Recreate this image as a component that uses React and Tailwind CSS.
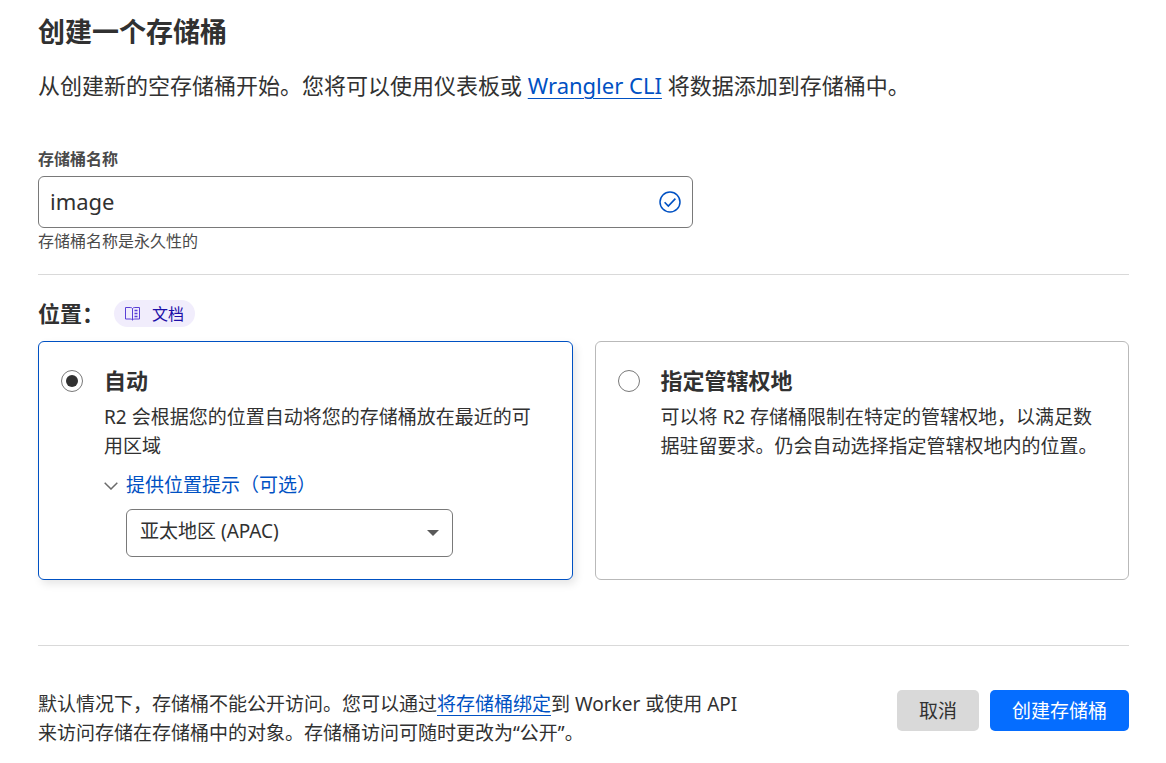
import { useState } from "react";

function CheckCircle() {
  return (
    <svg viewBox="0 0 22 22" className="h-[22px] w-[22px]" fill="none" stroke="#0051c3" aria-hidden="true">
      <circle cx="11" cy="11" r="10" strokeWidth="1.5" />
      <path d="M5.6 11.3 9.3 15 16.4 7.6" strokeWidth="1.6" />
    </svg>
  );
}

function DocsIcon() {
  return (
    <svg viewBox="0 0 15 14" className="h-[14px] w-[15px]" fill="none" stroke="#5a3fd6" strokeWidth="1" aria-hidden="true">
      <path d="M7.5 1.5C7 .8 6.200.5 5.200.5H.5v11.500h4.700c1 0 1.800.3 2.300 1 .5-.7 1.300-1 2.300-1h4.700V.5H9.800c-1 0-1.800.3-2.300 1ZM7.500 1.500V13" />
      <path d="M9.500 3.500h3M9.500 6.500h3M9.500 9.500h3" strokeWidth="1.3" />
    </svg>
  );
}

function Radio({ id, checked, onChange }) {
  return (
    <input
      id={id}
      type="radio"
      name="location"
      checked={checked}
      onChange={onChange}
      className="mt-[6px] h-[22px] w-[22px] shrink-0 appearance-none rounded-full border border-[#797979] bg-white bg-clip-content p-[4px] checked:bg-[#313131]"
    />
  );
}

function LocationCard({ id, title, selected, onSelect, description, children }) {
  return (
    <div
      className={
        selected
          ? "flex gap-[21px] rounded-md border border-[#0051c3] bg-white p-[22px] shadow-[3px_4px_8px_rgba(0,0,0,0.1)]"
          : "flex gap-[21px] rounded-md border border-[#b9b9b9] bg-white p-[22px]"
      }
    >
      <Radio id={id} checked={selected} onChange={onSelect} />
      <div className="min-w-0 flex-1">
        <label htmlFor={id} className="block text-[22px] leading-8 font-bold">
          {title}
        </label>
        <p className="mt-[7px] text-[19px] leading-[29px]">{description}</p>
        {children}
      </div>
    </div>
  );
}

export default function App() {
  const [name, setName] = useState("image");
  const [location, setLocation] = useState("auto");
  const [region, setRegion] = useState("apac");
  const [hintOpen, setHintOpen] = useState(true);

  return (
    <main
      lang="zh-CN"
      className="bg-white pt-[14px] pr-[37px] pb-4 pl-[38px] font-['Noto_Sans','Noto_Sans_CJK_SC',sans-serif] text-[#313131]"
    >
      <h1 className="text-[27px] leading-9 font-bold">创建一个存储桶</h1>
      <p className="mt-[19px] text-[22px] leading-8">
        从创建新的空存储桶开始。您将可以使用仪表板或{" "}
        <a href="#wrangler" className="text-[#0051c3] underline decoration-1 underline-offset-4">
          Wrangler CLI
        </a>{" "}
        将数据添加到存储桶中。
      </p>

      <div className="mt-[46px] w-3/5">
        <label htmlFor="bucket-name" className="block text-[16px] leading-6 font-semibold text-[#4a4a4a]">
          存储桶名称
        </label>
        <div className="mt-[5px] flex h-[52px] items-center rounded-md border border-[#797979] px-[11px]">
          <input
            id="bucket-name"
            type="text"
            value={name}
            onChange={(e) => setName(e.target.value)}
            className="min-w-0 flex-1 pb-[2px] text-[22px] outline-none"
          />
          <CheckCircle />
        </div>
        <p className="mt-px text-[16px] leading-6 text-[#4a4a4a]">存储桶名称是永久性的</p>
      </div>

      <hr className="mt-[21px] border-[#d9d9d9]" />

      <div className="mt-6 flex items-center gap-[10px]">
        <h2 className="text-[22px] leading-7 font-bold">位置：</h2>
        <a
          href="#docs"
          className="flex h-[27px] items-center gap-3 rounded-full bg-[#f1edfc] px-[11px] pt-px text-[16px] text-[#1c0fa8]"
        >
          <DocsIcon />
          文档
        </a>
      </div>

      <div className="mt-[14px] grid grid-cols-2 gap-[22px]">
        <LocationCard
          id="location-auto"
          title="自动"
          selected={location === "auto"}
          onSelect={() => setLocation("auto")}
          description="R2 会根据您的位置自动将您的存储桶放在最近的可用区域"
        >
          <button
            type="button"
            aria-expanded={hintOpen}
            onClick={() => setHintOpen(!hintOpen)}
            className="mt-[10px] flex items-center gap-2 text-[19px] leading-[29px] text-[#0051c3]"
          >
            <svg viewBox="0 0 14 8" className="h-2 w-[14px]" fill="none" stroke="#6b6b6b" strokeWidth="1.5" aria-hidden="true">
              <path d="M.7.7 7 7 13.300.7" />
            </svg>
            提供位置提示（可选）
          </button>
          {hintOpen && (
            <div className="mt-[9px] ml-[22px] grid max-w-[327px] items-center">
              <select
                aria-label="位置提示"
                value={region}
                onChange={(e) => setRegion(e.target.value)}
                className="col-start-1 row-start-1 h-12 w-full appearance-none rounded-md border border-[#797979] bg-white px-[13px] pb-1 text-[19px]"
              >
                <option value="apac">亚太地区 (APAC)</option>
              </select>
              <svg
                viewBox="0 0 12 6"
                className="pointer-events-none col-start-1 row-start-1 mr-[14px] h-[6px] w-3 justify-self-end"
                fill="#595959"
                aria-hidden="true"
              >
                <path d="M0 0h12L6 6Z" />
              </svg>
            </div>
          )}
        </LocationCard>
        <LocationCard
          id="location-jurisdiction"
          title="指定管辖权地"
          selected={location === "jurisdiction"}
          onSelect={() => setLocation("jurisdiction")}
          description="可以将 R2 存储桶限制在特定的管辖权地，以满足数据驻留要求。仍会自动选择指定管辖权地内的位置。"
        />
      </div>

      <hr className="mt-[65px] border-[#d9d9d9]" />

      <div className="mt-11 flex items-start justify-between gap-8 text-[19px]">
        <p className="max-w-[720px] leading-[29px]">
          默认情况下，存储桶不能公开访问。您可以通过
          <a href="#bind" className="text-[#0051c3] underline decoration-1 underline-offset-4">
            将存储桶绑定
          </a>
          到 Worker 或使用 API <wbr />
          来访问存储在存储桶中的对象。存储桶访问可随时更改为“公开”。
        </p>
        <div className="flex shrink-0 gap-[11px]">
          <button type="button" className="h-[41px] rounded-[5px] bg-[#d9d9d9] px-[22px] pt-px">
            取消
          </button>
          <button type="button" className="h-[41px] rounded-[5px] bg-[#056dff] px-[22px] pt-px text-white">
            创建存储桶
          </button>
        </div>
      </div>
    </main>
  );
}
